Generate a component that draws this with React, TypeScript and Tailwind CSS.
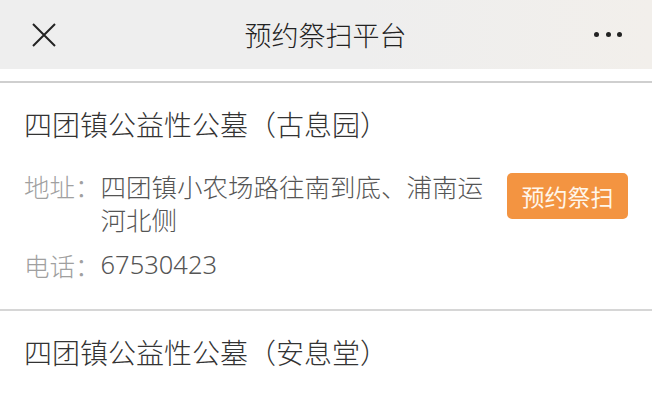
const cemeteries = [
    {
        name: '四团镇公益性公墓（古息园）',
        address: '四团镇小农场路往南到底、浦南运河北侧',
        phone: '67530423',
    },
    {
        name: '四团镇公益性公墓（安息堂）',
        address: '四团镇小农场路往南到底、浦南运河北侧',
        phone: '67530423',
    },
];

const font = { fontFamily: '"Noto Sans CJK SC", "Noto Sans", sans-serif' };

export default function App() {
    return (
        <div className="h-[400px] w-[652px] overflow-hidden bg-white" style={font}>
            <header className="flex h-[69px] items-center justify-between bg-[linear-gradient(90deg,#eeeeee_55%,#f2efeb)] pl-[31px] pr-[30px]">
                <svg width="26" height="26" viewBox="0 0 26 26" className="text-[#222]">
                    <path d="M2 2L24 24M24 2L2 24" stroke="currentColor" strokeWidth="2" fill="none" />
                </svg>
                <h1 className="text-[27px] font-light leading-none text-[#222]">预约祭扫平台</h1>
                <div className="flex w-[28px] items-center justify-between">
                    <span className="size-[5px] rounded-full bg-[#222]" />
                    <span className="size-[5px] rounded-full bg-[#222]" />
                    <span className="size-[5px] rounded-full bg-[#222]" />
                </div>
            </header>
            <div className="h-[14px] border-b-2 border-[#cfcfcf] bg-white" />

            {cemeteries.map((c) => (
                <section key={c.name} className="border-b-2 border-[#d6d6d6] px-[24px] pb-[28px] pt-[23px]">
                    <h2 className="text-[28px] font-light leading-[36px] text-[#333]">{c.name}</h2>
                    <div className="mt-[27px] flex items-start justify-between">
                        <div className="flex w-[480px] text-[25.5px] font-light leading-[33px]">
                            <span className="shrink-0 text-[#a0a0a0]">地址：</span>
                            <span className="text-[#555]">{c.address}</span>
                        </div>
                        <button className="mt-[4px] h-[46px] w-[121px] rounded-[5px] bg-[#f39441] text-[23px] text-[#fff6ea]">
                            预约祭扫
                        </button>
                    </div>
                    <div className="mt-[13px] flex text-[25.5px] font-light leading-[33px]">
                        <span className="text-[#a0a0a0]">电话：</span>
                        <span className="text-[#555]" style={{ fontFamily: '"Noto Sans", "Noto Sans CJK SC", sans-serif' }}>
                            {c.phone}
                        </span>
                    </div>
                </section>
            ))}
        </div>
    );
}
